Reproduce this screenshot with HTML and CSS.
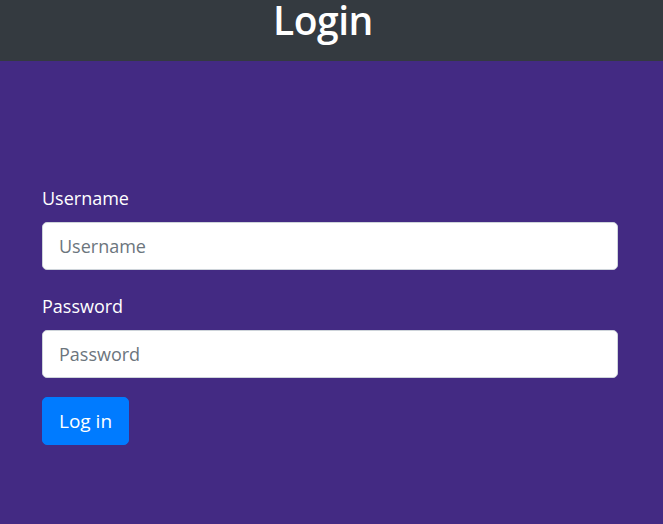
FILE: index.html
```html
<!DOCTYPE html>
<html lang="en">
<head>
<meta charset="utf-8">
<title>Login</title>
<link rel="stylesheet" href="styles.css">
</head>
<body>
<header class="topbar">
  <h1 class="title">Login</h1>
</header>
<main class="content">
  <form class="login-form">
    <div class="form-group">
      <label class="form-label" for="username">Username</label>
      <input class="form-control" id="username" type="text" placeholder="Username">
    </div>
    <div class="form-group">
      <label class="form-label" for="password">Password</label>
      <input class="form-control" id="password" type="password" placeholder="Password">
    </div>
    <button class="btn-primary" type="button">Log in</button>
  </form>
</main>
</body>
</html>
```

FILE: styles.css
```css
* { box-sizing: border-box; }
html, body { height: 100%; }
body {
  margin: 0;
  background: #432a83;
  font-family: "Open Sans", "Noto Sans", sans-serif;
  color: #fff;
}
.topbar {
  height: 61px;
  background: #343a40;
  display: flex;
  justify-content: center;
  align-items: flex-start;
  padding-right: 17px;
}
.title {
  margin: 0;
  font-size: 39px;
  font-weight: 600;
  line-height: 40px;
  letter-spacing: -0.5px;
  color: #fff;
}
.content {
  padding: 122px 45px 0 42px;
}
.login-form {
  display: flex;
  flex-direction: column;
  align-items: flex-start;
}
.form-group {
  width: 100%;
  display: flex;
  flex-direction: column;
  margin-bottom: 21px;
}
.form-group + .form-group { margin-bottom: 19px; }
.form-label {
  font-size: 18px;
  line-height: 30px;
  margin-bottom: 9px;
  color: #fff;
}
.form-control {
  width: 100%;
  height: 48px;
  padding: 8px 16px;
  font-family: inherit;
  font-size: 18px;
  color: #495057;
  background: #fff;
  border: 1px solid #ced4da;
  border-radius: 5px;
  outline: none;
}
.form-control::placeholder { color: #6c757d; }
.btn-primary {
  height: 48px;
  padding: 0 16px;
  font-family: inherit;
  font-size: 19px;
  color: #fff;
  background: #007bff;
  border: 1px solid #007bff;
  border-radius: 5px;
}
```
